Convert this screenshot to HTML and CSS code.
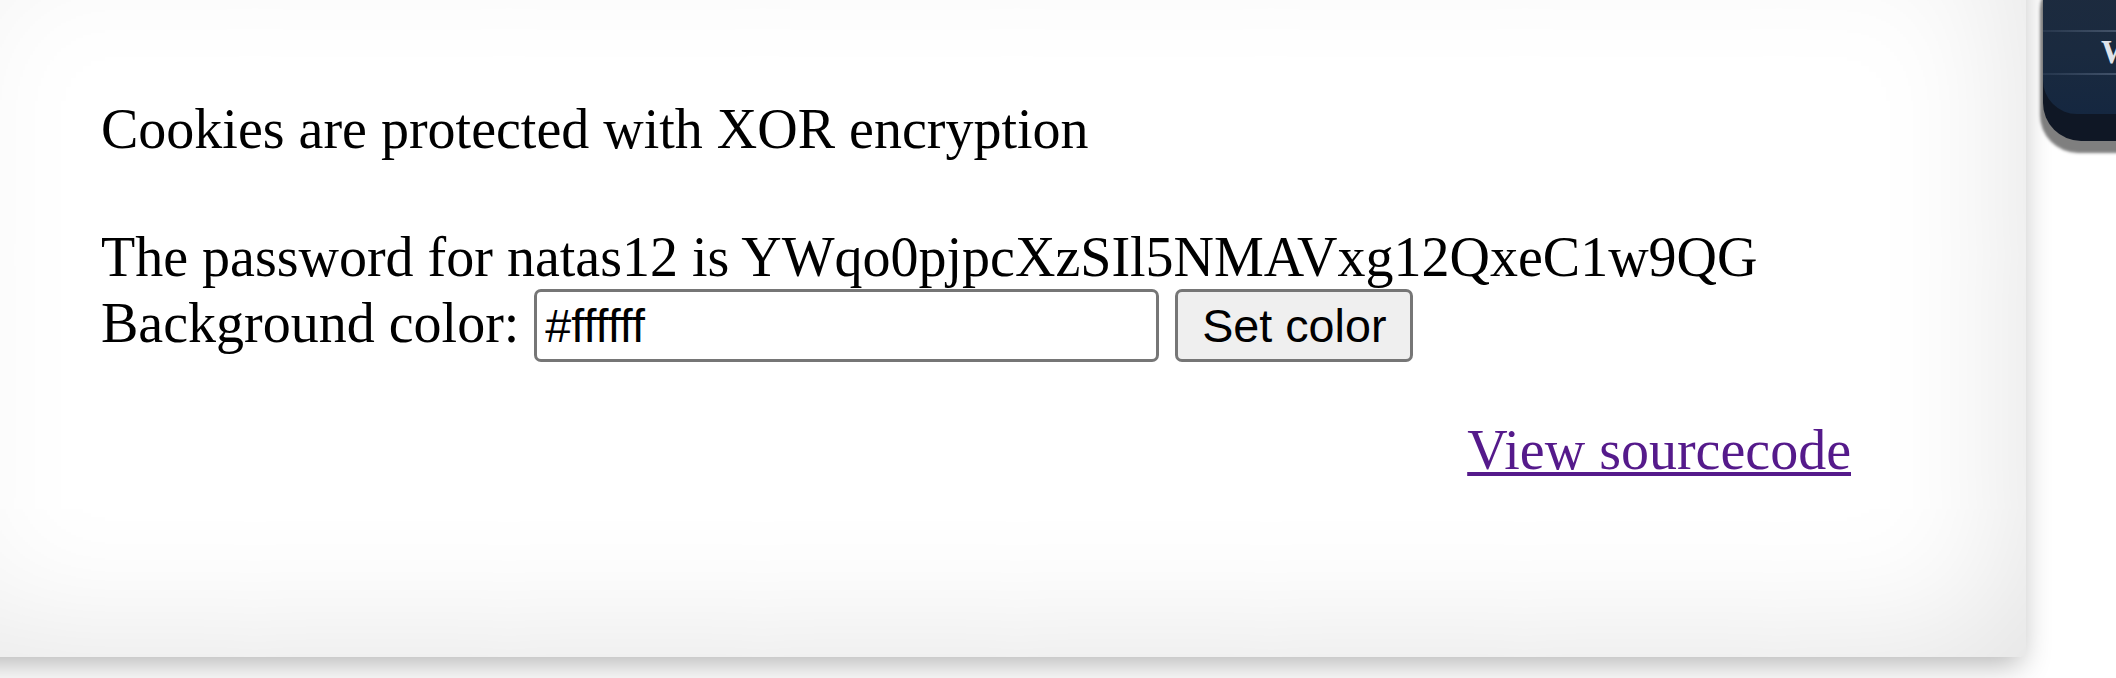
FILE: index.html
```html
<!DOCTYPE html>
<html>
<head>
<meta charset="utf-8">
<title>natas11</title>
<link rel="stylesheet" href="styles.css">
</head>
<body>
<div class="content">
Cookies are protected with XOR encryption<br><br>
The password for natas12 is YWqo0pjpcXzSIl5NMAVxg12QxeC1w9QG<br>
<form class="form">
Background color: <input class="field field-text" name="bgcolor" value="#ffffff"> <input class="field field-btn" type="submit" value="Set color">
</form>
<div class="viewsource"><a href="#">View sourcecode</a></div>
</div>
<a class="wechall" href="#"><span class="wechall-face"><span class="wechall-label">WeChall</span></span></a>
</body>
</html>
```

FILE: styles.css
```css
html, body {
  margin: 0;
  padding: 0;
  background: #ffffff;
}

body {
  width: 2116px;
  height: 678px;
  overflow: hidden;
  position: relative;
  font-family: "Liberation Serif", "Times New Roman", serif;
  font-size: 56px;
  color: #000;
}

.content {
  width: 1750px;
  margin: -78px 0 0 -74px;
  padding: 175px;
  background: #ffffff;
  border-radius: 0 0 6px 0;
  box-shadow: inset 0 0 150px rgba(0, 0, 0, 0.13), 0 12px 30px -5px rgba(0, 0, 0, 0.3);
}

.form {
  margin: 0 0 56px;
}

.field {
  font-family: "Liberation Sans", Arial, sans-serif;
  font-size: 46.7px;
  height: 73px;
  box-sizing: border-box;
  border: 3px solid #767676;
  border-radius: 7px;
  color: #000;
  vertical-align: baseline;
  margin: 0 1px;
}

.field-text {
  width: 625px;
  padding: 0 8px;
  background: #fff;
}

.field-btn {
  width: 238px;
  padding: 0;
  background: #efefef;
  text-align: center;
}

.viewsource {
  text-align: right;
}

.viewsource a {
  color: #551a8b;
  text-decoration: underline;
  text-decoration-thickness: 4px;
  text-underline-offset: 3px;
}

.wechall {
  position: absolute;
  top: -40px;
  left: 2043px;
  width: 170px;
  height: 181px;
  border-radius: 38px;
  background: #0f1725;
  box-shadow: -3px 12px 3px rgba(0, 0, 0, 0.5);
  overflow: hidden;
  text-decoration: none;
}

.wechall-face {
  display: block;
  height: 154px;
  padding-top: 70px;
  box-sizing: border-box;
  border-radius: 34px 0 0 34px;
  background: linear-gradient(#1e2b3e, #1a2a3f 60%, #152740);
}

.wechall-label {
  display: block;
  height: 45px;
  box-sizing: border-box;
  padding-left: 58px;
  border-top: 2px solid;
  border-bottom: 2px solid;
  border-image: linear-gradient(to right, rgba(140, 160, 190, 0.1), rgba(170, 185, 210, 0.55)) 1;
  font-family: "Liberation Serif", serif;
  font-weight: bold;
  font-size: 33px;
  line-height: 41px;
  color: #dfe3ea;
  white-space: nowrap;
}
```
